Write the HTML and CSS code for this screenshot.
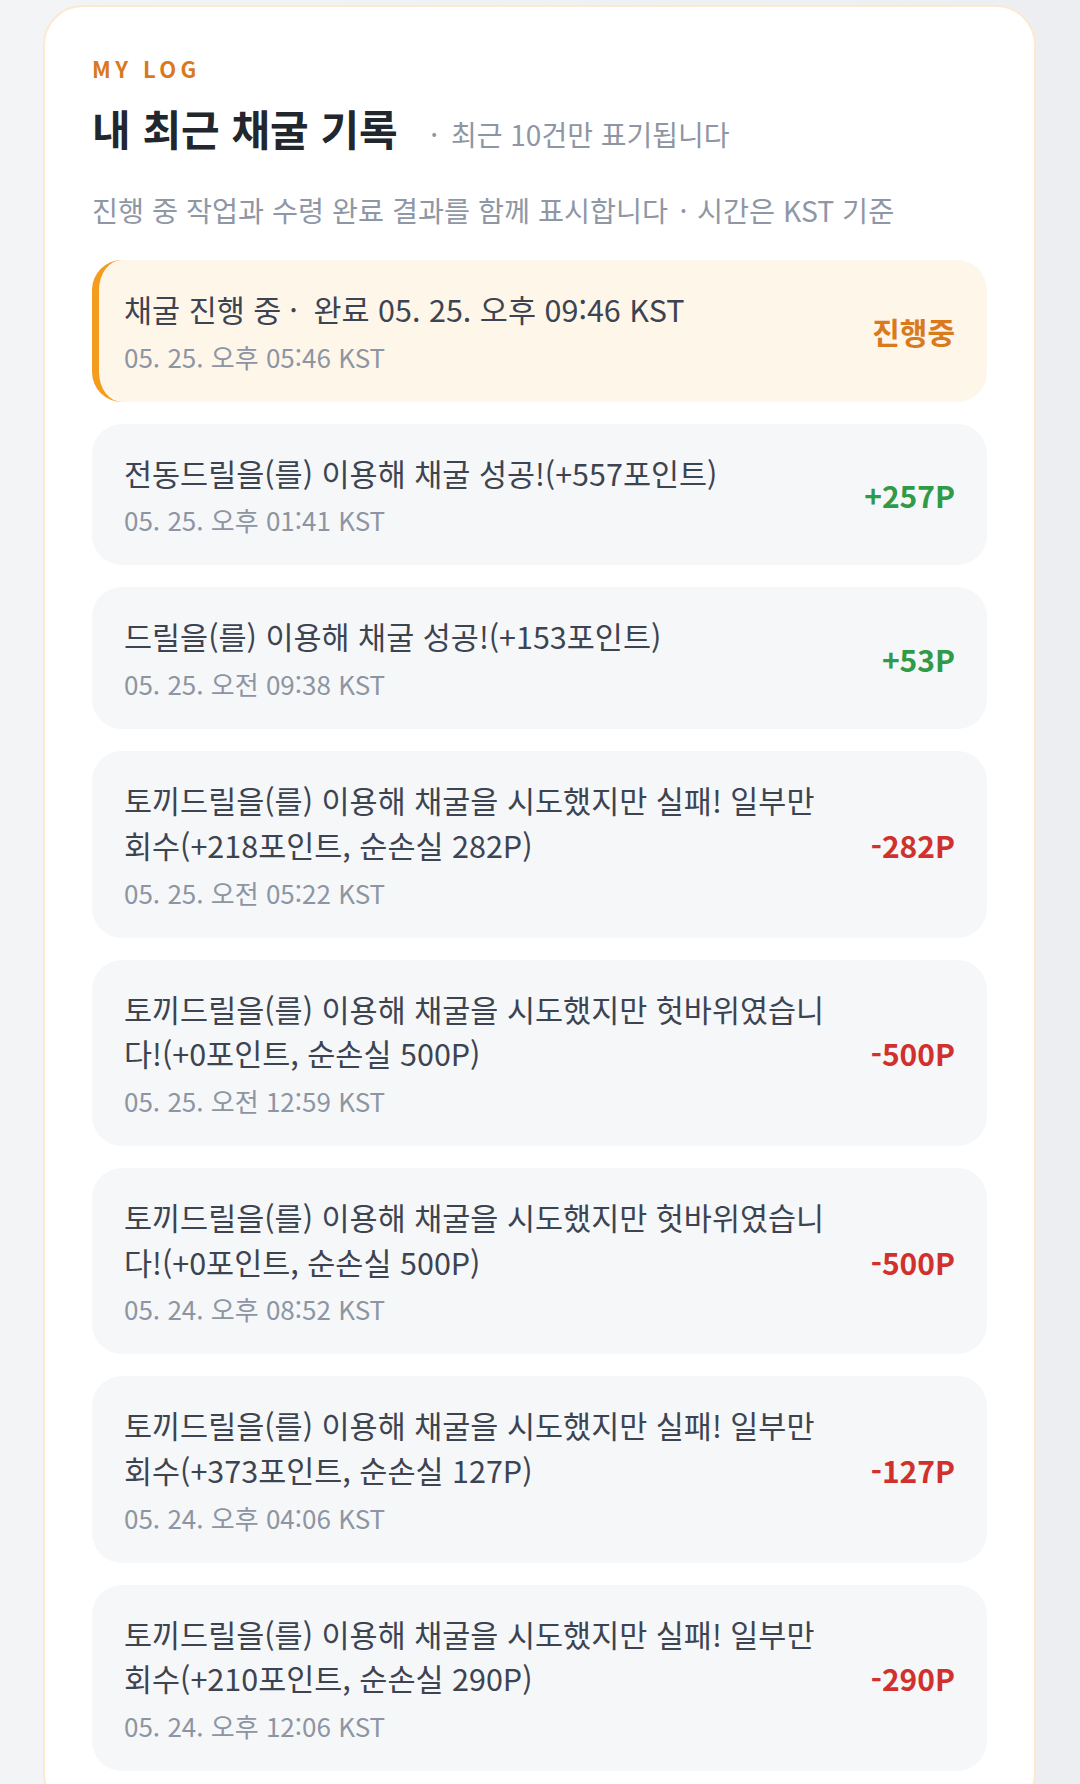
FILE: index.html
```html
<!DOCTYPE html>
<html lang="ko">
<head>
<meta charset="utf-8">
<title>MY LOG</title>
<link rel="stylesheet" href="styles.css">
</head>
<body>
<main class="page">
  <section class="card">
    <header class="card-head">
      <p class="eyebrow">MY LOG</p>
      <div class="title-row">
        <h1 class="title">내 최근 채굴 기록</h1>
        <span class="title-note"><span class="sep sep-note">·</span>최근 10건만 표기됩니다</span>
      </div>
      <p class="desc">진행 중 작업과 수령 완료 결과를 함께 표시합니다<span class="sep sep-desc">·</span>시간은 KST 기준</p>
    </header>
    <ul class="log-list">
      <li class="log-item active">
        <div class="log-text">
          <p class="log-title">채굴 진행 중<span class="sep sep-title">·</span>완료 05. 25. 오후 09:46 KST</p>
          <p class="log-date">05. 25. 오후 05:46 KST</p>
        </div>
        <span class="log-amount pending">진행중</span>
      </li>
      <li class="log-item">
        <div class="log-text">
          <p class="log-title">전동드릴을(를) 이용해 채굴 성공!(+557포인트)</p>
          <p class="log-date">05. 25. 오후 01:41 KST</p>
        </div>
        <span class="log-amount plus">+257P</span>
      </li>
      <li class="log-item">
        <div class="log-text">
          <p class="log-title">드릴을(를) 이용해 채굴 성공!(+153포인트)</p>
          <p class="log-date">05. 25. 오전 09:38 KST</p>
        </div>
        <span class="log-amount plus">+53P</span>
      </li>
      <li class="log-item">
        <div class="log-text">
          <p class="log-title">토끼드릴을(를) 이용해 채굴을 시도했지만 실패! 일부만 회수(+218포인트, 순손실 282P)</p>
          <p class="log-date">05. 25. 오전 05:22 KST</p>
        </div>
        <span class="log-amount minus">-282P</span>
      </li>
      <li class="log-item">
        <div class="log-text">
          <p class="log-title">토끼드릴을(를) 이용해 채굴을 시도했지만 헛바위였습니다!(+0포인트, 순손실 500P)</p>
          <p class="log-date">05. 25. 오전 12:59 KST</p>
        </div>
        <span class="log-amount minus">-500P</span>
      </li>
      <li class="log-item">
        <div class="log-text">
          <p class="log-title">토끼드릴을(를) 이용해 채굴을 시도했지만 헛바위였습니다!(+0포인트, 순손실 500P)</p>
          <p class="log-date">05. 24. 오후 08:52 KST</p>
        </div>
        <span class="log-amount minus">-500P</span>
      </li>
      <li class="log-item">
        <div class="log-text">
          <p class="log-title">토끼드릴을(를) 이용해 채굴을 시도했지만 실패! 일부만 회수(+373포인트, 순손실 127P)</p>
          <p class="log-date">05. 24. 오후 04:06 KST</p>
        </div>
        <span class="log-amount minus">-127P</span>
      </li>
      <li class="log-item">
        <div class="log-text">
          <p class="log-title">토끼드릴을(를) 이용해 채굴을 시도했지만 실패! 일부만 회수(+210포인트, 순손실 290P)</p>
          <p class="log-date">05. 24. 오후 12:06 KST</p>
        </div>
        <span class="log-amount minus">-290P</span>
      </li>
    </ul>
  </section>
</main>
</body>
</html>
```
FILE: styles.css
```css
* { box-sizing: border-box; }
html, body {
  margin: 0;
  padding: 0;
}
body {
  background: linear-gradient(90deg, #f3f4f6 0%, #eceef1 100%);
  font-family: "Noto Sans CJK KR", "Noto Sans", sans-serif;
  color: #3d4451;
}
.page {
  padding: 5px 44px 0 43px;
}
.card {
  background: #ffffff;
  border: 2px solid #fee8d0;
  border-radius: 40px;
  padding: 46px 47px 40px;
}
.eyebrow {
  margin: 0;
  font-size: 22px;
  line-height: 30px;
  font-weight: 700;
  letter-spacing: 0.2em;
  color: #d9791c;
}
.title-row {
  display: flex;
  align-items: baseline;
  gap: 28px;
  margin-top: 17px;
}
.title {
  margin: 0;
  font-size: 42px;
  line-height: 56px;
  font-weight: 700;
  color: #22262d;
}
.title-note {
  font-size: 28px;
  color: #8e96a4;
}
.desc {
  margin: 34px 0 0;
  font-size: 28.3px;
  line-height: 40px;
  color: #8f97a5;
}
.sep {
  display: inline-block;
  text-align: center;
}
.sep-note {
  width: 0.6em;
  margin-right: 0.3em;
}
.sep-desc {
  width: 0.6em;
  margin: 0 0.18em 0 0.24em;
}
.sep-title {
  width: 0.6em;
  margin: 0 0.35em 0 0.1em;
}
.log-list {
  list-style: none;
  margin: 30px 0 0;
  padding: 0;
  display: flex;
  flex-direction: column;
  gap: 22px;
}
.log-item {
  display: flex;
  align-items: center;
  gap: 28px;
  background: #f6f7f9;
  border-radius: 30px;
  padding: 27px 32px 26px;
}
.log-item.active {
  background: #fff6ea;
  border-left: 7px solid #f39c1e;
  padding-left: 25px;
}
.log-text {
  flex: 1;
  min-width: 0;
}
.log-title {
  margin: 0;
  font-size: 30.5px;
  line-height: 44.7px;
  color: #3d4451;
}
.log-date {
  margin: 5px 0 0;
  font-size: 26px;
  line-height: 39px;
  color: #8d95a3;
}
.log-amount {
  flex-shrink: 0;
  font-size: 30px;
  font-weight: 700;
  text-align: right;
}
.log-amount.pending { color: #d97a1e; }
.log-amount.plus { color: #2f9a47; }
.log-amount.minus { color: #d0312d; }
```
